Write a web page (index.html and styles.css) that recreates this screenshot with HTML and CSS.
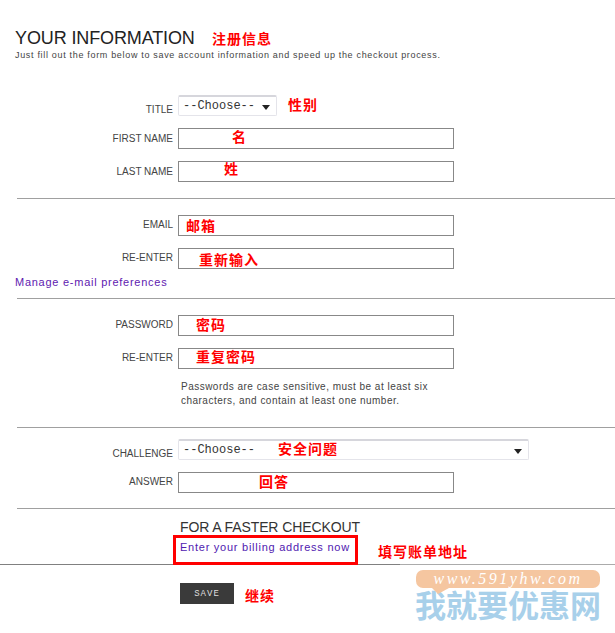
FILE: index.html
```html
<!DOCTYPE html>
<html lang="en">
<head>
    <meta charset="UTF-8">
    <meta name="viewport" content="width=device-width, initial-scale=1.0">
    <title>Your Information</title>
    <link rel="stylesheet" href="styles.css">
</head>
<body>
    <div class="page">
        <div class="page-header">
            <h1>YOUR INFORMATION<span class="note note-heading">注册信息</span></h1>
            <p>Just fill out the form below to save account information and speed up the checkout process.</p>
        </div>

        <div class="section section-name">
            <div class="form-row row-select">
                <label for="title">TITLE</label>
                <div class="field">
                    <div class="select-box select-small">
                        <select id="title"><option>--Choose--</option></select>
                    </div>
                    <span class="note note-title">性别</span>
                </div>
            </div>
            <div class="form-row">
                <label for="firstName">FIRST NAME</label>
                <div class="field"><input type="text" id="firstName"><span class="note note-first">名</span></div>
            </div>
            <div class="form-row">
                <label for="lastName">LAST NAME</label>
                <div class="field"><input type="text" id="lastName"><span class="note note-last">姓</span></div>
            </div>
        </div>

        <div class="section section-email">
            <div class="form-row">
                <label for="email">EMAIL</label>
                <div class="field"><input type="text" id="email"><span class="note note-email">邮箱</span></div>
            </div>
            <div class="form-row">
                <label for="email2">RE-ENTER</label>
                <div class="field"><input type="text" id="email2"><span class="note note-email2">重新输入</span></div>
            </div>
            <a class="prefs-link" href="#">Manage e-mail preferences</a>
        </div>

        <div class="section section-password">
            <div class="form-row">
                <label for="password">PASSWORD</label>
                <div class="field"><input type="text" id="password"><span class="note note-password">密码</span></div>
            </div>
            <div class="form-row">
                <label for="password2">RE-ENTER</label>
                <div class="field"><input type="text" id="password2"><span class="note note-password2">重复密码</span></div>
            </div>
            <p class="hint">Passwords are case sensitive, must be at least six<br>characters, and contain at least one number.</p>
        </div>

        <div class="section section-challenge">
            <div class="form-row row-select">
                <label for="challenge">CHALLENGE</label>
                <div class="field">
                    <div class="select-box select-wide">
                        <select id="challenge"><option>--Choose--</option></select>
                    </div>
                    <span class="note note-challenge">安全问题</span>
                </div>
            </div>
            <div class="form-row">
                <label for="answer">ANSWER</label>
                <div class="field"><input type="text" id="answer"><span class="note note-answer">回答</span></div>
            </div>
        </div>

        <div class="section section-checkout">
            <h2>FOR A FASTER CHECKOUT</h2>
            <a class="billing-link" href="#">Enter your billing address now</a>
            <span class="note note-billing">填写账单地址</span>
        </div>

        <div class="section section-save">
            <button type="button" class="save-btn">SAVE</button>
            <span class="note note-save">继续</span>
            <div class="watermark">
                <div class="watermark-url">www.591yhw.com</div>
                <div class="watermark-name">我就要优惠网</div>
            </div>
        </div>
    </div>
</body>
</html>
```

FILE: styles.css
```css
body {
    margin: 0;
    background-color: #FFFFFF;
    color: #333333;
    font-family: 'Liberation Sans', Arial, sans-serif;
}

.page {
    position: relative;
    width: 615px;
    height: 633px;
    overflow: hidden;
}

.page-header {
    padding: 28px 0 0 15px;
}

.page-header h1 {
    position: relative;
    margin: 0;
    font-size: 18px;
    line-height: 20px;
    font-weight: normal;
    letter-spacing: -0.12px;
    color: #222222;
}

.page-header p {
    margin: 1px 0 0;
    font-size: 9px;
    line-height: 13px;
    letter-spacing: 0.68px;
    color: #444444;
}

/* Sections, each one closed by a grey rule */
.section {
    position: relative;
    margin-left: 17px;
    border-bottom: 1px solid #A0A0A0;
    box-sizing: border-box;
}

.section-name {
    height: 137px;
    padding-top: 33px;
}

.section-email {
    height: 100px;
    padding-top: 16px;
}

.section-password {
    height: 129px;
    padding-top: 16px;
}

.section-challenge {
    height: 81px;
    padding-top: 11px;
}

.section-checkout {
    height: 56px;
    margin-left: 0;
    border-bottom: 1px solid #808080;
    border-image: linear-gradient(to right, #808080 400px, #ABABAB 400px) 1;
    padding: 10px 0 0 180px;
}

.section-save {
    height: 68px;
    margin-left: 0;
    border-bottom: none;
    padding: 18px 0 0 180px;
}

/* Form rows */
.form-row {
    display: flex;
    align-items: flex-start;
    height: 21px;
    margin-bottom: 12px;
}

.form-row label {
    width: 156px;
    padding-top: 4px;
    text-align: right;
    font-size: 10px;
    line-height: 12px;
    color: #444444;
}

.section-name .form-row label {
    padding-top: 5px;
}

.section-name .row-select label,
.row-select label {
    padding-top: 9px;
}

.field {
    position: relative;
    margin-left: 5px;
}

.field input {
    display: block;
    width: 276px;
    height: 21px;
    box-sizing: border-box;
    border: 1px solid #888888;
    margin: 0;
    padding: 0 4px;
    background-color: #FFFFFF;
}

.select-box {
    position: relative;
    height: 21px;
    box-sizing: border-box;
    border: 1px solid #E4E4EA;
    border-top: 2px solid #D6D6DC;
    border-radius: 2px;
    background-color: #FFFFFF;
}

.select-box::after {
    content: "";
    position: absolute;
    top: 8px;
    right: 6px;
    border-left: 4px solid transparent;
    border-right: 4px solid transparent;
    border-top: 5px solid #222222;
}

.select-small {
    width: 99px;
}

.select-wide {
    width: 351px;
}

.select-box select {
    display: block;
    width: 100%;
    height: 100%;
    border: none;
    margin: 0;
    padding: 0 0 1px 4px;
    background: transparent;
    font-family: 'Liberation Mono', monospace;
    font-size: 12px;
    color: #333333;
    appearance: none;
    outline: none;
}

/* Links and small text */
.prefs-link {
    display: block;
    margin: -6px 0 0 -2px;
    font-size: 11px;
    line-height: 14px;
    letter-spacing: 0.74px;
    color: #6020B0;
    text-decoration: none;
}

.hint {
    margin: -1px 0 0 164px;
    font-size: 10px;
    line-height: 14px;
    letter-spacing: 0.48px;
    color: #444444;
}

.section-checkout h2 {
    margin: 0;
    font-size: 14px;
    line-height: 16px;
    font-weight: normal;
    letter-spacing: -0.1px;
    color: #333333;
}

.billing-link {
    position: relative;
    display: block;
    width: 175px;
    height: 24px;
    margin: 0 0 0 -7px;
    padding: 0 0 0 4px;
    border: 3px solid #FF0000;
    font-size: 11px;
    line-height: 18px;
    letter-spacing: 0.75px;
    color: #5020B0;
    text-decoration: none;
    box-sizing: content-box;
}

.save-btn {
    display: block;
    width: 54px;
    height: 21px;
    border: none;
    padding: 0;
    background-color: #3A3A3A;
    color: #DDDDDD;
    font-family: 'Liberation Mono', monospace;
    font-size: 9px;
    letter-spacing: 1px;
}

/* Red notes written over the screenshot */
.note {
    position: absolute;
    font-family: 'Noto Sans CJK SC', sans-serif;
    font-size: 14px;
    line-height: 16px;
    font-weight: bold;
    letter-spacing: 1px;
    color: #FF0000;
    white-space: nowrap;
}

.note-heading { left: 197px; top: 2px; }
.note-title { left: 110px; top: 1px; }
.note-first { left: 54px; top: 0; }
.note-last { left: 46px; top: -1px; }
.note-email { left: 8px; top: 2px; }
.note-email2 { left: 21px; top: 3px; }
.note-password { left: 18px; top: 1px; }
.note-password2 { left: 18px; top: 0; }
.note-challenge { left: 100px; top: 1px; }
.note-answer { left: 81px; top: 1px; }
.note-billing { left: 378px; top: 34px; }
.note-save { left: 245px; top: 22px; }

/* Site watermark, bottom right */
.watermark {
    position: absolute;
    left: 415px;
    top: 5px;
    width: 200px;
}

.watermark-url {
    width: 184px;
    height: 18px;
    margin-left: 1px;
    border-radius: 7px;
    background-color: #F5C6A0;
    font-family: 'Liberation Serif', serif;
    font-style: italic;
    font-size: 16px;
    line-height: 18px;
    letter-spacing: 2.5px;
    text-align: center;
    color: #FFFFFF;
}

.watermark-url::after {
    content: "";
    position: absolute;
    left: 17px;
    top: 18px;
    border-left: 6px solid transparent;
    border-right: 11px solid transparent;
    border-top: 6px solid #F5C6A0;
}

.watermark-name {
    font-family: 'Noto Sans CJK SC', sans-serif;
    font-size: 31px;
    line-height: 31px;
    font-weight: bold;
    white-space: nowrap;
    color: #A8D0EA;
}
```
